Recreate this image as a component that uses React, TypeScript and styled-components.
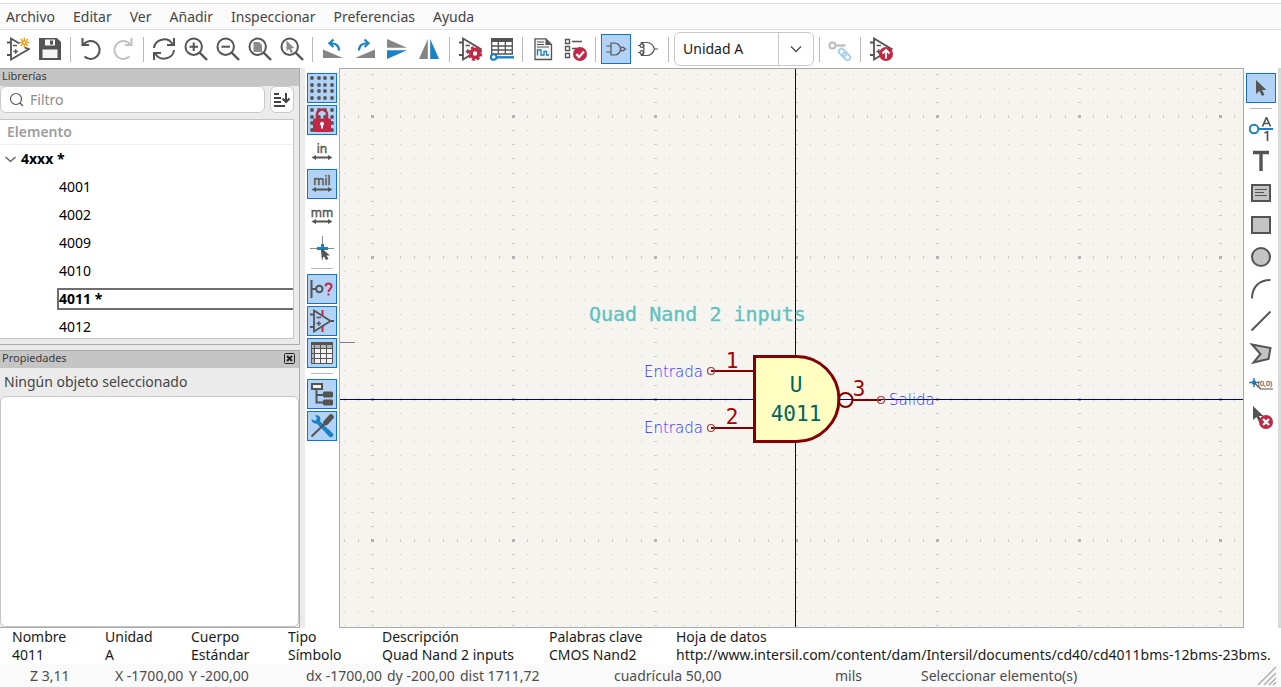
import React from "react";
import styled, { createGlobalStyle } from "styled-components";

const ink = "#545454";
const blue = "#1a81c4";
const red = "#c22745";
const uiFont = '"Noto Sans", "Open Sans", sans-serif';
const plotFont = '"DejaVu Sans Mono", monospace';

const GlobalStyle = createGlobalStyle`
  * { box-sizing: border-box; }
  body { margin: 0; background: #fff; font: 14px/18px ${uiFont}; color: #1a1a1a; }
  button, input, select { font: inherit; color: inherit; }
`;

const Page = styled.div`
  display: flex;
  flex-direction: column;
  height: 100vh;
  padding-top: 3px;
  overflow: hidden;
`;

const MenuBar = styled.nav`
  display: flex;
  flex: none;
  gap: 18px;
  height: 27px;
  padding: 0 6px;
  background: #fafafa;
  border-top: 1px solid #dcdcdc;
  border-bottom: 1px solid #e0e0e0;
`;

const MenuItem = styled.button`
  padding: 0;
  border: 0;
  background: none;
  color: #454545;
`;

const TopBar = styled.div`
  display: flex;
  flex: none;
  align-items: center;
  gap: 2px;
  height: 38px;
  padding: 0 3px;
`;

const ToolButton = styled.button<{ $active?: boolean }>`
  display: grid;
  flex: none;
  place-items: center;
  width: 30px;
  height: 30px;
  padding: 0;
  border: 1px solid ${(p) => (p.$active ? "#0c74dc" : "transparent")};
  background: ${(p) => (p.$active ? "#b2d3f5" : "none")};
`;

const Separator = styled.div<{ $row?: boolean }>`
  flex: none;
  width: ${(p) => (p.$row ? "22px" : "7px")};
  height: ${(p) => (p.$row ? "7px" : "25px")};
  padding: ${(p) => (p.$row ? "3px 0" : "0 3px")};
  background: #b8b8b8 content-box;
`;

const UnitPicker = styled.div`
  display: grid;
  grid-template-columns: 1fr 35px;
  flex: none;
  width: 140px;
  height: 34px;
  border: 1px solid #c9c9c9;
  border-radius: 6px;
  background: #fff;
`;

const UnitSelect = styled.select`
  grid-area: 1 / 1 / 2 / 3;
  padding: 0 8px;
  border: 0;
  background: none;
  appearance: none;
`;

const UnitArrow = styled.span`
  display: grid;
  grid-area: 1 / 2;
  place-items: center;
  border-left: 1px solid #c9c9c9;
  pointer-events: none;
`;

const Workspace = styled.main`
  display: flex;
  flex: 1;
  min-height: 0;
`;

const Sidebar = styled.aside`
  display: flex;
  flex: none;
  flex-direction: column;
  gap: 5px;
  width: 305px;
  padding-right: 5px;
  background: #ebebeb;
`;

const Panel = styled.section<{ $grow?: boolean }>`
  display: flex;
  flex: ${(p) => (p.$grow ? "1" : "none")};
  flex-direction: column;
  min-height: 0;
  border: solid #aaa;
  border-width: 1px 1px 1px 0;
`;

const PanelTitle = styled.h2`
  display: flex;
  flex: none;
  align-items: center;
  justify-content: space-between;
  height: 17px;
  margin: 0;
  padding: 0 4px 4px 2px;
  background: #c5c5c5;
  color: #3c3c3c;
  font-size: 11px;
  font-weight: 400;
  line-height: 13px;
`;

const CloseButton = styled.button`
  display: grid;
  align-self: flex-start;
  width: 11px;
  height: 13px;
  padding: 2px 0 0;
  border: 0;
  background: none;
`;

const FilterRow = styled.div`
  display: flex;
  gap: 5px;
  padding: 0 5px 6px 0;
`;

const FilterBox = styled.label`
  display: flex;
  flex: 1;
  align-items: center;
  gap: 6px;
  height: 27px;
  padding-left: 8px;
  border: 1px solid #c9c9c9;
  border-radius: 6px;
  background: #fff;
`;

const FilterInput = styled.input`
  flex: 1;
  min-width: 0;
  padding: 0;
  border: 0;
  outline: 0;
  background: none;
  &::placeholder { color: #8c8c8c; }
`;

const SortButton = styled.button`
  display: grid;
  place-items: center;
  width: 24px;
  height: 27px;
  padding: 0;
  border: 1px solid #c9c9c9;
  border-radius: 6px;
  background: #fff;
`;

const Tree = styled.div`
  height: 220px;
  margin: 0 5px 5px 0;
  overflow: hidden;
  border: solid #c5c5c5;
  border-width: 1px 1px 1px 0;
  background: #fff;
`;

const TreeHeader = styled.div`
  height: 25px;
  padding: 3px 7px;
  border-bottom: 1px solid #f0f0f0;
  color: #9c9c9c;
  font-weight: 600;
`;

const TreeList = styled.ul`
  margin: 0;
  padding: 0;
  list-style: none;
`;

const TreeRow = styled.li<{ $root?: boolean; $current?: boolean }>`
  display: flex;
  align-items: center;
  gap: 5px;
  height: 28px;
  padding-left: ${(p) => (p.$root ? "5px" : "57px")};
  color: #000;
  font-weight: ${(p) => (p.$root || p.$current ? 700 : 400)};
`;

const TreeLabel = styled.span<{ $current?: boolean }>`
  flex: 1;
  padding: 0 0 0 ${(p) => (p.$current ? "0" : "2px")};
  border: solid #6e6e6e;
  border-width: ${(p) => (p.$current ? "2px 0 2px 2px" : "0")};
`;

const RootLabel = styled.span`
  flex: 1;
`;

const EmptyNote = styled.p`
  flex: none;
  margin: 0;
  padding: 5px 4px;
  color: #444;
`;

const PropertyList = styled.div`
  flex: 1;
  border: 1px solid #c5c5c5;
  border-radius: 6px;
  background: #fff;
`;

const SideBar = styled.div`
  display: flex;
  flex: none;
  flex-direction: column;
  align-items: center;
  gap: 2px;
  width: 34px;
  padding-top: 5px;
`;

const Canvas = styled.div`
  flex: 1;
  min-width: 0;
  overflow: hidden;
  border: 1px solid #aaa;
  background: #f5f4ef;
`;

const Drawing = styled.svg`
  display: block;
  width: 100%;
  height: 100%;
`;

const WindowEdge = styled.div`
  flex: none;
  width: 3px;
  background: #dadada;
`;

const InfoPanel = styled.dl`
  display: grid;
  grid-template-columns: 93px 86px 97px 94px 167px 127px 1fr;
  flex: none;
  height: 36px;
  margin: 0;
  padding-left: 12px;
  overflow: hidden;
  white-space: nowrap;
`;

const InfoField = styled.div`
  min-width: 0;
`;

const InfoTerm = styled.dt``;

const InfoValue = styled.dd`
  margin: 0;
`;

const StatusBar = styled.footer`
  display: grid;
  grid-template-columns: 85px 74px 117px 81px 73px 154px 221px 86px 1fr 22px;
  flex: none;
  align-items: center;
  height: 23px;
  padding: 0 3px 0 30px;
  background: #fafafa;
  color: #4c4c4c;
  white-space: nowrap;
`;

/* ---------- icons ---------- */

type IconProps = { children: React.ReactNode; size?: number };

const Icon = ({ children, size = 24 }: IconProps) => (
  <svg width={size} height={size} viewBox={`0 0 ${size} ${size}`} fill="none" stroke={ink} strokeWidth={2} aria-hidden="true">
    {children}
  </svg>
);

const OpAmp = () => (
  <g strokeWidth={1.8}>
    <path d="M5 1.5V22.500L22.500 12Z" />
    <path d="M1 5.500H5M1 18H5" />
    <path d="M7.500 8.500H12M7.500 14.500H12M9.700 12.300V16.700" strokeWidth={1.5} />
  </g>
);

const arrowShape = "M0 0V14L3.500 11L6 16L8.500 14.800L6 10H10.500Z";

const Lens = ({ children }: { children: React.ReactNode }) => (
  <Icon>
    <circle cx="9.700" cy="9.700" r="8.200" />
    <path d="M15.500 15.500L23 23" strokeWidth={2.4} />
    {children}
  </Icon>
);

const GridDots = () => (
  <g fill={ink} stroke="none">
    {[2, 9, 15, 22].map((y) => [2, 9, 15, 22].map((x) => <circle key={`${x}-${y}`} cx={x} cy={y} r="1.900" />))}
  </g>
);

const UnitIcon = ({ label }: { label: string }) => (
  <Icon>
    <text x="12" y="13" textAnchor="middle" fontSize="12" fontFamily="Noto Sans, sans-serif" fill={ink} stroke={ink} strokeWidth="0.400">
      {label}
    </text>
    <path d="M4 17.500H20" />
    <path d="M1.500 17.500L6 15V20ZM22.500 17.500L18 15V20Z" fill={ink} stroke="none" />
  </Icon>
);

const rotateIcon = (
  <>
    <path d="M2 12.500V21H22Z" fill="#858585" stroke="none" />
    <path d="M18 13.500C18 8.500 14.500 6 9 6.300M12.500 2.500L8.500 6.300L12.500 10" stroke={blue} strokeWidth={2.2} />
  </>
);

const undoPath = "M3.500 1V8H10M4.500 7.500A9 9 0 1 1 5.500 19.500";

const icons = {
  newSymbol: (
    <Icon>
      <path d="M13.500 6.500L5 1.500V22.500L23 12L18.500 10.500M1 5.500H5M1 18H5" strokeWidth={1.8} />
      <path d="M7 8.500H11M7.500 14.500H12M9.700 12.300V16.700" strokeWidth={1.5} />
      <path d="M18.300 0.500V10.500M13.300 5.500H23.300M14.800 2L21.800 9M21.800 2L14.800 9" stroke="#f29a13" strokeWidth={1.3} />
      <circle cx="18.300" cy="5.500" r="1" fill="#fff" stroke="none" />
    </Icon>
  ),
  save: (
    <Icon>
      <path d="M1 1H19L23 5V23H1Z" fill={ink} stroke="none" />
      <path d="M7 2.500H17V8.500H7ZM4.500 12.500H19.500V21H4.500Z" fill="#f5f5f5" stroke="none" />
      <path d="M12 3.500H15V7.500H12Z" fill={ink} stroke="none" />
    </Icon>
  ),
  undo: <Icon><path d={undoPath} strokeWidth={2.1} /></Icon>,
  redo: <Icon><path d={undoPath} strokeWidth={2.1} stroke="#c2c2c2" transform="translate(24 0) scale(-1 1)" /></Icon>,
  refresh: (
    <Icon>
      <path d="M2 11A10 9.500 0 0 1 20.500 7M22 1V8H15M22 13A10 9.500 0 0 1 3.500 17M2 23V16H9" />
    </Icon>
  ),
  zoomIn: <Lens><path d="M5.500 9.700H14M9.700 5.500V14" /></Lens>,
  zoomOut: <Lens><path d="M5.500 9.700H14" /></Lens>,
  zoomFit: <Lens><path d="M5.500 5H11L14 8V15H5.500Z" fill="#8c8c8c" stroke="none" /></Lens>,
  zoomSelection: <Lens><path d="M6.500 3.500V14L9 12L11 16L13 15L11 11.200H14.500Z" fill="#8c8c8c" stroke="none" /></Lens>,
  rotateLeft: <Icon>{rotateIcon}</Icon>,
  rotateRight: <Icon><g transform="translate(24 0) scale(-1 1)">{rotateIcon}</g></Icon>,
  mirrorV: (
    <Icon>
      <path d="M2 2V10.800H22Z" fill="#858585" stroke="none" />
      <path d="M2 22V13.200H22Z" fill={blue} stroke="none" />
    </Icon>
  ),
  mirrorH: (
    <Icon>
      <path d="M10.800 2V22H2Z" fill="#858585" stroke="none" />
      <path d="M13.200 2V22H22Z" fill={blue} stroke="none" />
    </Icon>
  ),
  symbolProps: (
    <Icon>
      <OpAmp />
      <circle cx="17" cy="16.500" r="4" fill="#fff" stroke={red} strokeWidth={3.6} />
      <circle cx="17" cy="16.500" r="6.200" stroke={red} strokeWidth={2.4} strokeDasharray="2.87 2" />
    </Icon>
  ),
  pinTable: (
    <Icon>
      <path d="M1 1H23V5H1Z" fill={ink} stroke="none" />
      <path d="M1.700 4V17.500M8.300 4V17.500M15.300 4V17.500M22.300 4V17.500M1 9H23M1 13H23M1 17H23" strokeWidth={1.3} />
      <path d="M6.500 20.300H24" stroke={blue} strokeWidth={2.4} />
      <circle cx="3.700" cy="20" r="2.800" stroke={blue} fill="#fff" />
    </Icon>
  ),
  datasheet: (
    <Icon>
      <path d="M4 1.800H15L20.500 7.500V22.500H4Z" fill="#f4f4f4" strokeWidth={1.3} />
      <path d="M14.500 1.500V8H20.500Z" fill={ink} stroke="none" />
      <path d="M6 5H13M6 7.500H13M6 10H18" strokeWidth={1.1} />
      <path d="M6.500 18.500V13H10V18H13V14.500H15.500V18H18" stroke={blue} strokeWidth={1.3} />
    </Icon>
  ),
  erc: (
    <Icon>
      <path d="M2.500 2.500H6.500V6.500H2.500ZM2.500 9.500H6.500V13.500H2.500ZM2.500 16.500H6.500V20.500H2.500ZM9 4.500H19M9 11.500H14" strokeWidth={1.3} />
      <circle cx="17" cy="17" r="7" fill={red} stroke="none" />
      <path d="M13.300 17L16 20L21 14.500" stroke="#fff" strokeWidth={2.2} />
    </Icon>
  ),
  gate: (
    <Icon>
      <path d="M7 6V18H10.500A6 6 0 0 0 10.500 6ZM2.500 9H7M2.500 15H7M20.500 12H22.500" strokeWidth={1.2} />
      <circle cx="18.500" cy="12" r="1.900" strokeWidth={1.2} />
    </Icon>
  ),
  gateAlt: (
    <Icon>
      <path d="M5.500 5.500H11C15 5.500 17.500 9 18.500 12C17.500 15 15 18.500 11 18.500H5.500C9 14 9 10 5.500 5.500ZM2 8.500H4M2 15.500H4M18.500 12H22" strokeWidth={1.2} />
      <circle cx="6" cy="8.500" r="1.900" strokeWidth={1.2} />
      <circle cx="6" cy="15.500" r="1.900" strokeWidth={1.2} />
    </Icon>
  ),
  pinLink: (
    <Icon>
      <circle cx="4.500" cy="8.500" r="3" stroke="#bdbdbd" />
      <path d="M7.500 8.500H17.500" stroke="#bdbdbd" strokeWidth={2.3} />
      <g stroke="#a6d0ec" strokeWidth={1.9} transform="rotate(45 16.500 17.500)">
        <rect x="9.500" y="14.800" width="8.500" height="5.400" rx="2.700" />
        <rect x="15" y="14.800" width="8.500" height="5.400" rx="2.700" />
      </g>
    </Icon>
  ),
  addToSchematic: (
    <Icon>
      <OpAmp />
      <circle cx="17" cy="17" r="7" fill={red} stroke="none" />
      <path d="M17 21.500V14M13.500 16.500L17 13L20.500 16.500" stroke="#fff" />
    </Icon>
  ),
  grid: <Icon><GridDots /></Icon>,
  gridLock: (
    <Icon>
      <GridDots />
      <path d="M7 12V6.500A5 5 0 0 1 17 6.500V12" stroke={red} strokeWidth={2.6} />
      <rect x="3" y="10.500" width="18" height="13.500" rx="1.500" fill={red} stroke="none" />
      <circle cx="12" cy="15.800" r="2" fill="#fff" stroke="none" />
      <path d="M12 16V20.500" stroke="#fff" />
    </Icon>
  ),
  inches: <UnitIcon label="in" />,
  mils: <UnitIcon label="mil" />,
  millimetres: <UnitIcon label="mm" />,
  crosshair: (
    <Icon>
      <path d="M12.500 0V24M0 12.500H24" stroke="#8c8c8c" strokeWidth={1} />
      <path d="M12.500 8V17M7 12.500H18" stroke={blue} strokeWidth={3} />
      <path d="M11.500 12V22.500L14 20.500L16 24L18.500 23L16.500 19.500H20Z" fill={ink} stroke="none" />
    </Icon>
  ),
  pinType: (
    <Icon>
      <path d="M1.500 3V21M1.500 12H6" />
      <circle cx="9.300" cy="12" r="3.200" />
      <path d="M15.500 9.500C15.500 5.500 21.500 5.500 21.500 9.500C21.500 12 18.500 12 18.500 15M18.500 16.500V18.500" stroke={red} />
    </Icon>
  ),
  hiddenPins: (
    <Icon>
      <path d="M12.500 1V23" stroke={red} />
      <path d="M4 1.500V22.500L20.500 12Z" fill="#b2d3f5" strokeWidth={1.8} />
      <path d="M0 5.500H4M0 18H4M20 12H24" strokeWidth={1.8} />
      <path d="M6.500 8.500H11M6.500 14.500H11M8.800 12.300V16.700" strokeWidth={1.5} />
    </Icon>
  ),
  table: (
    <Icon>
      <path d="M1 2H23V23H1Z" fill="#f2f2f2" stroke="none" />
      <path d="M1 4H23V8H1ZM1 4H4V23H1Z" fill="#b4b4b4" stroke="none" />
      <path d="M1 1H23V4H1Z" fill={ink} stroke="none" />
      <path d="M1.500 4V22.500H22.500V4M4.500 4V22M10.500 4V22M16.500 4V22M1 7.500H23M1 12.500H23M1 17.500H23" strokeWidth={1} />
    </Icon>
  ),
  tree: (
    <Icon>
      <path d="M6.500 7V20.500H13M6.500 13H13" />
      <rect x="2" y="2" width="10" height="5" fill="#f2f2f2" />
      <path d="M14 9.500H22L23 10.500V14.500L22 15.500H14L13 14.500V10.500ZM14 17.500H22L23 18.500V22.500L22 23.500H14L13 22.500V18.500Z" fill={ink} stroke="none" />
    </Icon>
  ),
  properties: (
    <Icon>
      <path d="M6 6L19 19" stroke={blue} strokeWidth={4} />
      <path d="M5 1.500C10 0 12 5 9 8.500C6 11 1.500 9 1.500 5L5 7L7.500 5ZM18 15L23 19.500C24 22 22 24 19.500 23L15 18Z" fill={blue} stroke="none" />
      <path d="M15.500 9L1.500 22.500" />
      <path d="M21 3L16 8.500" strokeWidth={5.5} strokeLinecap="round" />
    </Icon>
  ),
  select: <Icon><path d={arrowShape} transform="translate(7 4)" fill={ink} stroke="none" /></Icon>,
  pin: (
    <Icon>
      <circle cx="5" cy="12" r="4.300" stroke={blue} />
      <path d="M9.500 12H24" stroke={blue} />
      <path d="M13.500 9.500L17.500 0.500L21.500 9.500M15 6.500H20M15.500 16L18.500 14.700V24" strokeWidth={1.7} />
    </Icon>
  ),
  text: <Icon><path d="M4 3.500H20M12 3.500V22" strokeWidth={3.4} /></Icon>,
  textBox: (
    <Icon>
      <rect x="3" y="4" width="18" height="16" fill="#c4c4c4" />
      <path d="M6 8.500H18M6 11.500H15M6 14.500H18" strokeWidth={1.2} />
    </Icon>
  ),
  rect: <Icon><rect x="3" y="4" width="18" height="16" fill="#c4c4c4" /></Icon>,
  circle: <Icon><circle cx="12" cy="12" r="9" fill="#c4c4c4" /></Icon>,
  arc: <Icon><path d="M3 21.500C3 10 10 3 21.500 3" /></Icon>,
  line: <Icon><path d="M2.500 21.500L21.500 2.500" /></Icon>,
  polygon: <Icon><path d="M3 3.500L21.500 7L19.500 18L4.500 21.500L11.500 13Z" fill="#c4c4c4" /></Icon>,
  anchor: (
    <Icon>
      <path d="M5 5V14M0 9.500H10" stroke={blue} strokeWidth={1.5} />
      <circle cx="5" cy="9.500" r="2.200" fill={blue} stroke="none" />
      <path d="M5 9.500L11.500 16H24" strokeWidth={1.2} />
      <text x="9" y="13" fontSize="7" fontFamily="Noto Sans, sans-serif" fill={ink} stroke={ink} strokeWidth="0.200">(0,0)</text>
    </Icon>
  ),
  erase: (
    <Icon>
      <path d={arrowShape} transform="translate(4 1)" fill={ink} stroke="none" />
      <circle cx="17" cy="17" r="7" fill={red} stroke="none" />
      <path d="M14 14L20 20M20 14L14 20" stroke="#fff" strokeWidth={2.3} />
    </Icon>
  ),
};

type Tool = [keyof typeof icons, string, boolean?] | "-";

const topTools: Tool[] = [
  ["newSymbol", "Nuevo símbolo"], ["save", "Guardar"], "-",
  ["undo", "Deshacer"], ["redo", "Rehacer"], "-",
  ["refresh", "Refrescar"], ["zoomIn", "Acercar"], ["zoomOut", "Alejar"], ["zoomFit", "Ajustar"], ["zoomSelection", "Ajustar a la selección"], "-",
  ["rotateLeft", "Girar a la izquierda"], ["rotateRight", "Girar a la derecha"], ["mirrorV", "Reflejar verticalmente"], ["mirrorH", "Reflejar horizontalmente"], "-",
  ["symbolProps", "Propiedades del símbolo"], ["pinTable", "Tabla de pines"], "-",
  ["datasheet", "Hoja de datos"], ["erc", "Comprobar símbolo"], "-",
  ["gate", "Cuerpo estándar", true], ["gateAlt", "Cuerpo alternativo"], "-",
];
const topToolsEnd: Tool[] = ["-", ["pinLink", "Pines sincronizados"], "-", ["addToSchematic", "Añadir al esquema"]];
const leftTools: Tool[] = [
  ["grid", "Cuadrícula", true], ["gridLock", "Bloquear cuadrícula", true], ["inches", "Pulgadas"], ["mils", "Milésimas", true],
  ["millimetres", "Milímetros"], ["crosshair", "Cursor"], "-",
  ["pinType", "Tipo de pin", true], ["hiddenPins", "Pines ocultos", true], ["table", "Campos", true], "-",
  ["tree", "Árbol", true], ["properties", "Propiedades", true],
];
const rightTools: Tool[] = [
  ["select", "Seleccionar", true], "-", ["pin", "Pin"], ["text", "Texto"], ["textBox", "Cuadro de texto"], ["rect", "Rectángulo"],
  ["circle", "Círculo"], ["arc", "Arco"], ["line", "Línea"], ["polygon", "Polígono"], ["anchor", "Ancla"], ["erase", "Borrar"],
];

const Tools = ({ items, rows }: { items: Tool[]; rows?: boolean }) => (
  <>
    {items.map((t, i) =>
      t === "-" ? (
        <Separator key={i} $row={rows} />
      ) : (
        <ToolButton key={i} $active={t[2]} aria-label={t[1]} aria-pressed={t[2]}>
          {icons[t[0]]}
        </ToolButton>
      )
    )}
  </>
);

/* ---------- drawing area ---------- */

// One tile holds three major divisions of ten steps each.
const TILE = 424;
const STEPS = 30;
const gridPaths = (() => {
  let minor = "";
  let major = "";
  for (let r = 0; r < STEPS; r++) {
    for (let c = 0; c < STEPS; c++) {
      const w = c % 10 === 0 ? 3 : 1;
      const h = r % 10 === 0 ? 3 : 1;
      const x = Math.round((c * TILE) / STEPS) + 1 - (w - 1) / 2;
      const y = Math.round((r * TILE) / STEPS) + 1 - (h - 1) / 2;
      const dot = `M${x} ${y}h${w}v${h}h-${w}z`;
      if (w * h === 9) major += dot;
      else minor += dot;
    }
  }
  return { minor, major };
})();

const Schematic = () => (
  <Drawing role="img" aria-label="Símbolo 4011">
    <defs>
      <pattern id="grid" x="31" y="46" width={TILE} height={TILE} patternUnits="userSpaceOnUse">
        <path d={gridPaths.minor} fill="#cbcbc8" shapeRendering="crispEdges" />
        <path d={gridPaths.major} fill="#b3b3b1" shapeRendering="crispEdges" />
      </pattern>
    </defs>
    <rect width="100%" height="100%" fill="url(#grid)" />
    <rect y="273" width="15" height="1" fill="#808080" />
    <rect y="330" width="100%" height="1" fill="#000084" />
    <rect x="455" width="1" height="100%" fill="#000084" />
    <g fill="none" stroke="#840000" strokeWidth="2">
      <path d="M414.500 287.500H456.500A42.500 42.500 0 0 1 456.500 372.500H414.500Z" fill="#ffffc2" strokeWidth="3" />
      <circle cx="505.500" cy="331" r="7" />
      <path d="M371 302H413M371 359H413M512.500 331H541" />
      <g stroke="#a83a3a" strokeWidth="1.200">
        <circle cx="371" cy="302" r="3.500" />
        <circle cx="371" cy="359" r="3.500" />
        <circle cx="541" cy="331" r="3.500" />
      </g>
    </g>
    <g fontFamily={plotFont} fontSize="20">
      <text x="249" y="252" fill="#5ec2c2" stroke="#5ec2c2" strokeWidth="0.300">Quad Nand 2 inputs</text>
      <g fontSize="21" textAnchor="middle">
        <text x="456" y="323" fill="#006464">U</text>
        <text x="456" y="352" fill="#006464">4011</text>
        <text x="392" y="299" fill="#a90000">1</text>
        <text x="392" y="355" fill="#a90000">2</text>
        <text x="519" y="327" fill="#a90000">3</text>
      </g>
    </g>
    <g fontFamily='"DejaVu Sans Light", "DejaVu Sans", sans-serif' fontWeight="200" fontSize="15" fill="#2c2cff">
      <text x="304" y="308">Entrada</text>
      <text x="304" y="364">Entrada</text>
      <text x="549" y="336">Salida</text>
    </g>
  </Drawing>
);

const menus = ["Archivo", "Editar", "Ver", "Añadir", "Inspeccionar", "Preferencias", "Ayuda"];
const symbols = ["4001", "4002", "4009", "4010", "4011 *", "4012"];
const info = [
  ["Nombre", "4011"],
  ["Unidad", "A"],
  ["Cuerpo", "Estándar"],
  ["Tipo", "Símbolo"],
  ["Descripción", "Quad Nand 2 inputs"],
  ["Palabras clave", "CMOS Nand2"],
  ["Hoja de datos", "http://www.intersil.com/content/dam/Intersil/documents/cd40/cd4011bms-12bms-23bms."],
];
const status = ["Z 3,11", "X -1700,00", "Y -200,00", "dx -1700,00", "dy -200,00", "dist 1711,72", "cuadrícula 50,00", "mils", "Seleccionar elemento(s)"];

export default function App() {
  return (
    <Page>
      <GlobalStyle />
      <MenuBar>
        {menus.map((m) => <MenuItem key={m}>{m}</MenuItem>)}
      </MenuBar>
      <TopBar>
        <Tools items={topTools} />
        <UnitPicker>
          <UnitSelect aria-label="Unidad"><option>Unidad A</option></UnitSelect>
          <UnitArrow>
            <svg width="12" height="8" fill="none" stroke="#4a4a4a" strokeWidth="1.300"><path d="M1 1.500L6 6.500L11 1.500" /></svg>
          </UnitArrow>
        </UnitPicker>
        <Tools items={topToolsEnd} />
      </TopBar>
      <Workspace>
        <Sidebar>
          <Panel>
            <PanelTitle>Librerías</PanelTitle>
            <FilterRow>
              <FilterBox>
                <svg width="15" height="15" fill="none" stroke="#555" strokeWidth="1.200" aria-hidden="true">
                  <circle cx="7" cy="7" r="5.500" /><path d="M11 11L14 14" />
                </svg>
                <FilterInput placeholder="Filtro" aria-label="Filtro" />
              </FilterBox>
              <SortButton aria-label="Ordenar">
                <svg width="16" height="16" fill="none" stroke="#444" strokeWidth="2" aria-hidden="true">
                  <path d="M0 2H5M0 6H7M0 10H7M0 14H11M12 1V9M8.500 6.500L12 10L15.500 6.500" />
                </svg>
              </SortButton>
            </FilterRow>
            <Tree>
              <TreeHeader>Elemento</TreeHeader>
              <TreeList role="tree">
                <TreeRow $root role="treeitem" aria-expanded="true">
                  <svg width="11" height="7" fill="none" stroke="#555" strokeWidth="1.200" aria-hidden="true"><path d="M0.500 1L5.500 5.500L10.500 1" /></svg>
                  <RootLabel>4xxx *</RootLabel>
                </TreeRow>
                {symbols.map((s) => {
                  const current = s === "4011 *";
                  return (
                    <TreeRow key={s} $current={current} role="treeitem" aria-selected={current}>
                      <TreeLabel $current={current}>{s}</TreeLabel>
                    </TreeRow>
                  );
                })}
              </TreeList>
            </Tree>
          </Panel>
          <Panel $grow>
            <PanelTitle>
              Propiedades
              <CloseButton aria-label="Cerrar">
                <svg width="11" height="11" fill="none" stroke="#222" aria-hidden="true">
                  <rect x="0.500" y="0.500" width="10" height="10" rx="1" /><path d="M3 3L8 8M8 3L3 8" strokeWidth="2" />
                </svg>
              </CloseButton>
            </PanelTitle>
            <EmptyNote>Ningún objeto seleccionado</EmptyNote>
            <PropertyList />
          </Panel>
        </Sidebar>
        <SideBar><Tools items={leftTools} rows /></SideBar>
        <Canvas><Schematic /></Canvas>
        <SideBar><Tools items={rightTools} rows /></SideBar>
        <WindowEdge />
      </Workspace>
      <InfoPanel>
        {info.map(([k, v]) => (
          <InfoField key={k}>
            <InfoTerm>{k}</InfoTerm>
            <InfoValue>{v}</InfoValue>
          </InfoField>
        ))}
      </InfoPanel>
      <StatusBar>
        {status.map((s) => <span key={s}>{s}</span>)}
        <svg width="22" height="20" fill="none" stroke="#b0b0b0" strokeWidth="1.500" aria-hidden="true">
          <path d="M2 19L20 1M8 19L20 7M13 19L20 12M17 19L20 16" />
        </svg>
      </StatusBar>
    </Page>
  );
}
